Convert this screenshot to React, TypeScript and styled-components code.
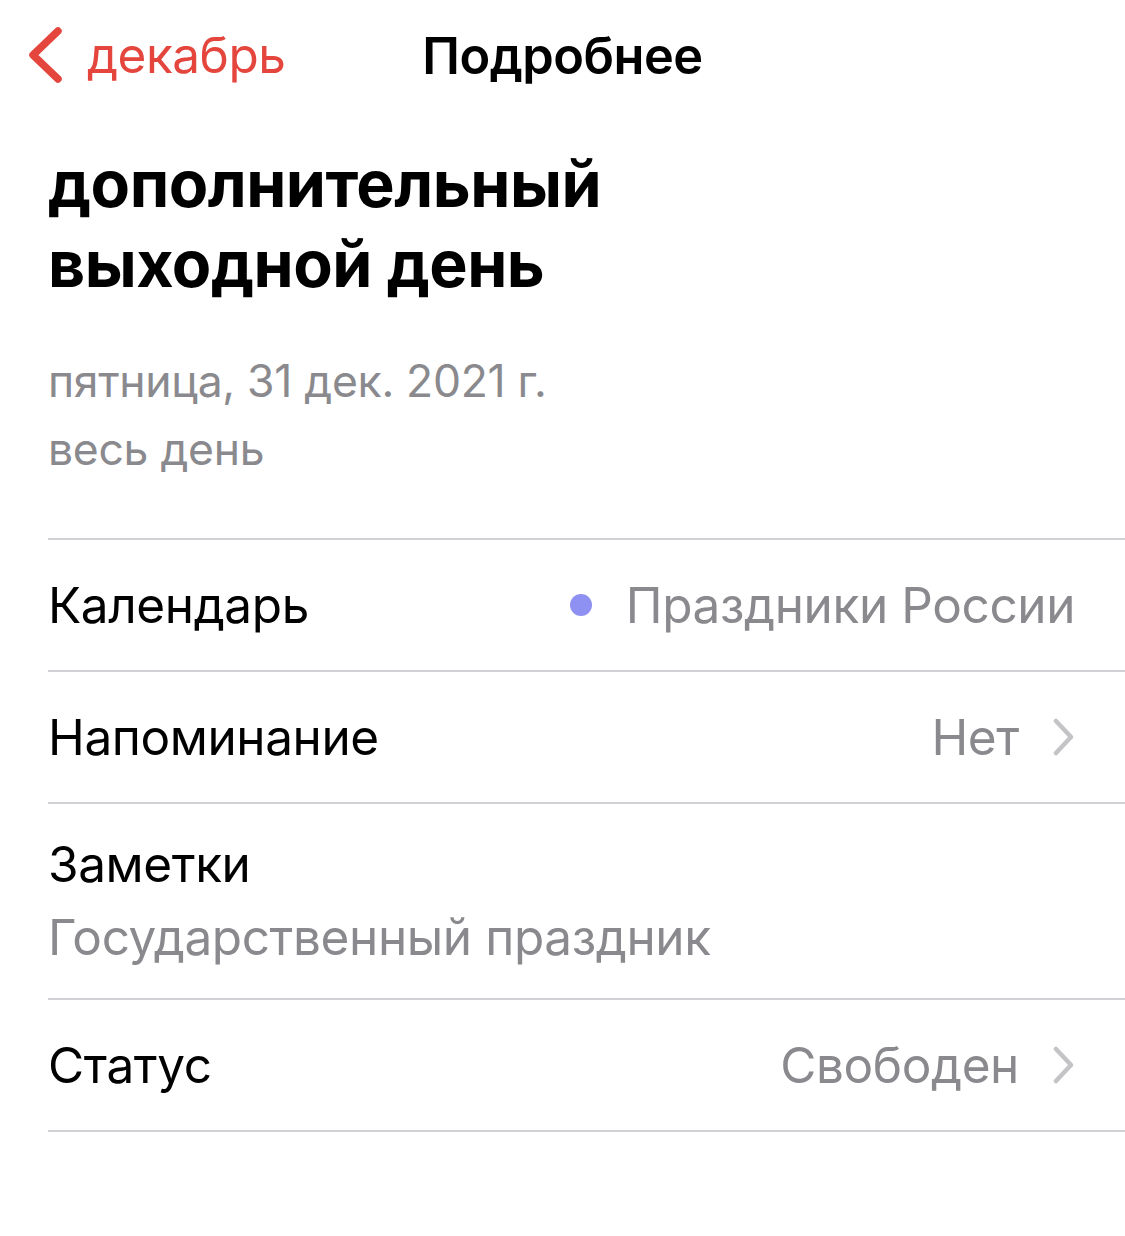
import React from "react";
import styled, { createGlobalStyle } from "styled-components";

const GlobalStyle = createGlobalStyle`
  html, body {
    margin: 0;
    padding: 0;
    background: #ffffff;
  }
  body {
    font-family: Inter, "Noto Sans", "Liberation Sans", sans-serif;
    -webkit-font-smoothing: antialiased;
  }
`;

const Screen = styled.div`
  width: 1125px;
  height: 1236px;
  background: #ffffff;
  overflow: hidden;
`;

const NavBar = styled.div`
  height: 110px;
  display: grid;
  grid-template-columns: 1fr auto 1fr;
  align-items: center;
`;

const BackButton = styled.div`
  display: flex;
  align-items: center;
  gap: 24px;
  padding-left: 27px;
  color: #e4463d;
  font-size: 49.5px;
  letter-spacing: -0.5px;
`;

const NavTitle = styled.div`
  font-size: 50.5px;
  font-weight: 600;
  color: #000;
  letter-spacing: -0.5px;
`;

const Header = styled.div`
  padding: 34px 48px 0;
`;

const Title = styled.h1`
  margin: 0;
  font-size: 64.5px;
  line-height: 80px;
  font-weight: 700;
  color: #000;
  letter-spacing: -0.5px;
`;

const DateLine = styled.div`
  margin-top: 43px;
  font-size: 44.5px;
  line-height: 68px;
  color: #8a8a8e;
  letter-spacing: -0.3px;
`;

const List = styled.div`
  margin: 55px 0 0 48px;
  border-top: 2px solid #d1d1d6;
`;

const Row = styled.div<{ $tall?: boolean }>`
  height: ${(p) => (p.$tall ? 194 : 130)}px;
  border-bottom: 2px solid #d1d1d6;
  display: flex;
  align-items: center;
  padding-right: 50px;
`;

const NotesRow = styled(Row)`
  flex-direction: column;
  align-items: flex-start;
  justify-content: center;
`;

const Label = styled.div`
  flex: 1;
  font-size: 49.5px;
  color: #000;
  letter-spacing: -0.4px;
`;

const Value = styled.div`
  display: flex;
  align-items: center;
  font-size: 49.5px;
  color: #8a8a8e;
  letter-spacing: -0.4px;
`;

const Dot = styled.span<{ $color: string }>`
  width: 22px;
  height: 22px;
  border-radius: 50%;
  background: ${(p) => p.$color};
  margin-right: 34px;
`;

const NoteLabel = styled(Label)`
  flex: none;
  line-height: 73px;
`;

const NoteText = styled(NoteLabel)`
  color: #8a8a8e;
`;

const Chevron = () => (
  <svg width="22" height="38" viewBox="0 0 22 38" style={{ marginLeft: 34 }}>
    <polyline
      points="3,3 18,19 3,35"
      fill="none"
      stroke="#c4c4c7"
      strokeWidth="4.5"
      strokeLinecap="round"
      strokeLinejoin="round"
    />
  </svg>
);

const BackChevron = () => (
  <svg width="36" height="56" viewBox="0 0 36 56">
    <polyline
      points="31,4 6,28 31,52"
      fill="none"
      stroke="#e4463d"
      strokeWidth="7.5"
      strokeLinecap="round"
      strokeLinejoin="round"
    />
  </svg>
);

export default function App() {
  return (
    <Screen>
      <GlobalStyle />
      <NavBar>
        <BackButton>
          <BackChevron />
          декабрь
        </BackButton>
        <NavTitle>Подробнее</NavTitle>
        <div />
      </NavBar>

      <Header>
        <Title>
          дополнительный
          <br />
          выходной день
        </Title>
        <DateLine>
          пятница, 31 дек. 2021 г.
          <br />
          весь день
        </DateLine>
      </Header>

      <List>
        <Row>
          <Label>Календарь</Label>
          <Value>
            <Dot $color="#8e90f2" />
            Праздники России
          </Value>
        </Row>
        <Row>
          <Label>Напоминание</Label>
          <Value>
            Нет
            <Chevron />
          </Value>
        </Row>
        <NotesRow $tall>
          <NoteLabel>Заметки</NoteLabel>
          <NoteText>Государственный праздник</NoteText>
        </NotesRow>
        <Row>
          <Label>Статус</Label>
          <Value>
            Свободен
            <Chevron />
          </Value>
        </Row>
      </List>
    </Screen>
  );
}
